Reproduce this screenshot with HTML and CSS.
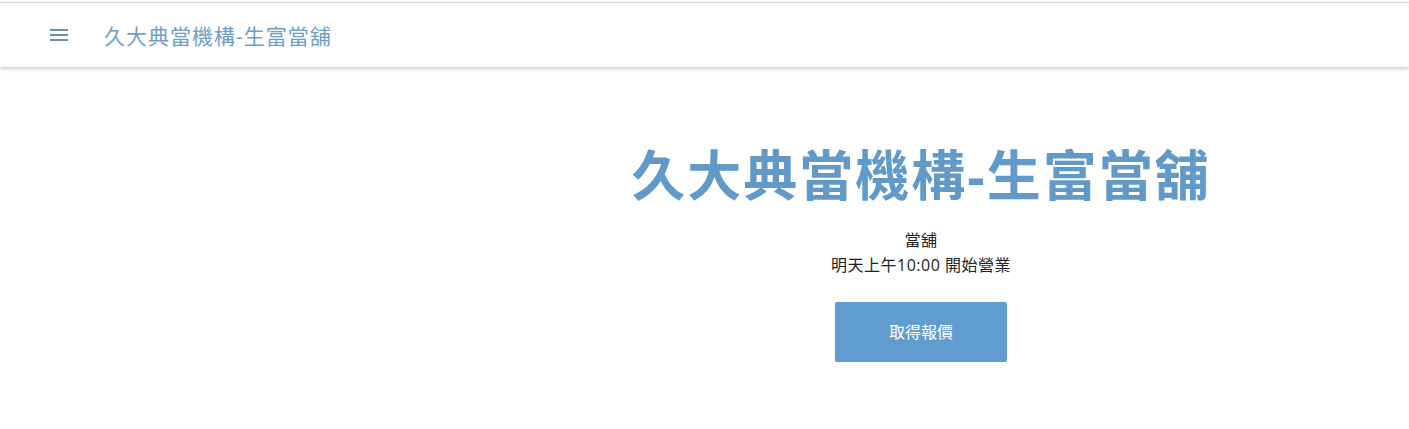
FILE: index.html
```html
<!DOCTYPE html>
<html lang="zh-Hant">
<head>
  <meta charset="UTF-8">
  <title>久大典當機構-生富當舖</title>
  <link rel="stylesheet" href="styles.css">
</head>
<body>

  <!-- HEADER -->
  <header class="top-bar">
    <button class="menu-btn" aria-label="選單">
      <svg viewBox="0 0 24 24" width="24" height="24"><path d="M3 18h18v-2H3v2zm0-5h18v-2H3v2zm0-7v2h18V6H3z"/></svg>
    </button>
    <span class="top-title">久大典當機構-生富當舖</span>
  </header>

  <!-- HERO -->
  <main class="hero">
    <div class="hero-side"></div>
    <div class="hero-main">
      <h1>久大典當機構-生富當舖</h1>
      <p class="kind">當舖</p>
      <p class="hours">明天上午10:00 開始營業</p>
      <a href="#" class="quote-btn">取得報價</a>
    </div>
  </main>

</body>
</html>
```

FILE: styles.css
```css
body, html {
  margin: 0;
  padding: 0;
  background: #fff;
  font-family: 'Open Sans', 'Noto Sans CJK TC', sans-serif;
  color: #333;
}

body {
  padding-top: 2px;
}

.top-bar {
  display: flex;
  align-items: center;
  height: 64px;
  padding-left: 47px;
  border-top: 1px solid #dcdcdc;
  background: #fff;
  box-shadow: 0 2px 4px rgba(0,0,0,0.2);
}

.menu-btn {
  width: 24px;
  height: 24px;
  padding: 0;
  border: none;
  background: none;
  cursor: pointer;
}

.menu-btn svg {
  display: block;
  fill: #6a8fb2;
}

.top-title {
  margin-left: 33px;
  font-size: 21px;
  letter-spacing: 1px;
  color: #6f9ec6;
}

.hero {
  display: grid;
  grid-template-columns: 433px 1fr;
  padding-top: 76px;
}

.hero-main {
  text-align: center;
}

.hero-main h1 {
  margin: 0 0 20px;
  font-size: 54px;
  line-height: 1.2;
  font-weight: bold;
  letter-spacing: 2px;
  color: #6199c9;
}

.hero-main p {
  margin: 0;
  font-size: 16px;
  line-height: 25px;
  letter-spacing: 0.5px;
  color: #222;
}

.quote-btn {
  display: inline-block;
  margin-top: 24px;
  width: 172px;
  height: 60px;
  line-height: 60px;
  background: #619ccf;
  color: #fff;
  font-size: 16px;
  text-decoration: none;
  border-radius: 2px;
  box-shadow: 0 1px 2px rgba(0,0,0,0.15);
}
```
